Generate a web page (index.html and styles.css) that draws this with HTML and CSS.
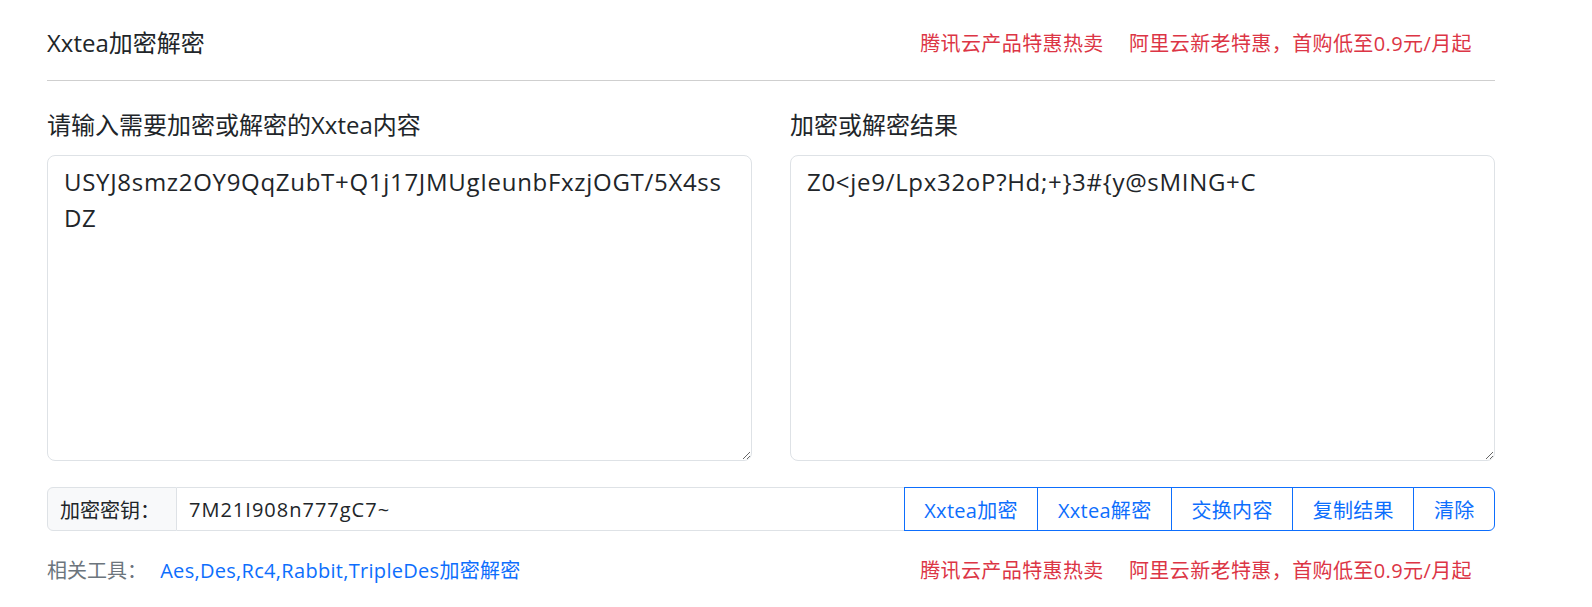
FILE: index.html
```html
<!DOCTYPE html>
<html lang="zh-CN">
<head>
    <meta charset="UTF-8">
    <meta name="viewport" content="width=device-width, initial-scale=1.0">
    <title>Xxtea加密解密</title>
    <link rel="stylesheet" href="styles.css">
</head>
<body>
    <div class="page">
        <div class="header">
            <h4 class="title">Xxtea加密解密</h4>
            <div class="ads">
                <a href="#">腾讯云产品特惠热卖</a>
                <a href="#">阿里云新老特惠，首购低至0.9元/月起</a>
            </div>
        </div>

        <div class="editors">
            <div class="editor">
                <label class="editor-label" for="source">请输入需要加密或解密的Xxtea内容</label>
                <textarea id="source" class="editor-box">USYJ8smz2OY9QqZubT+Q1j17JMUgIeunbFxzjOGT/5X4ssDZ</textarea>
            </div>
            <div class="editor">
                <label class="editor-label" for="result">加密或解密结果</label>
                <textarea id="result" class="editor-box">Z0&lt;je9/Lpx32oP?Hd;+}3#{y@sMING+C</textarea>
            </div>
        </div>

        <div class="key-group">
            <span class="key-label">加密密钥：</span>
            <input class="key-input" type="text" value="7M21I908n777gC7~">
            <button class="action-btn">Xxtea加密</button>
            <button class="action-btn">Xxtea解密</button>
            <button class="action-btn">交换内容</button>
            <button class="action-btn">复制结果</button>
            <button class="action-btn">清除</button>
        </div>

        <div class="footer">
            <div class="related">
                <span class="related-label">相关工具：</span>
                <a href="#">Aes,Des,Rc4,Rabbit,TripleDes加密解密</a>
            </div>
            <div class="ads">
                <a href="#">腾讯云产品特惠热卖</a>
                <a href="#">阿里云新老特惠，首购低至0.9元/月起</a>
            </div>
        </div>
    </div>
</body>
</html>
```

FILE: styles.css
```css
body {
    margin: 0;
    background: #fff;
    color: #212529;
    font-family: "Open Sans", "Noto Sans CJK SC", sans-serif;
}
a {
    text-decoration: none;
}
.page {
    width: 1448px;
    margin-left: 47px;
}
.header {
    display: flex;
    justify-content: space-between;
    align-items: center;
    padding: 28px 0 23px;
    border-bottom: 1px solid #cfcfcf;
}
.title {
    margin: 0;
    font-size: 24px;
    font-weight: 400;
    line-height: 29px;
}
.ads a {
    color: #dc3545;
    font-size: 20px;
    letter-spacing: 0.4px;
    margin-right: 21px;
}
.ads a:last-child {
    margin-right: 23px;
}
.editors {
    display: grid;
    grid-template-columns: 705px 705px;
    column-gap: 38px;
    margin-top: 29px;
}
.editor-label {
    display: block;
    font-size: 24px;
    line-height: 29px;
    margin-bottom: 16px;
}
.editor-box {
    display: block;
    box-sizing: border-box;
    width: 100%;
    height: 306px;
    padding: 8px 16px;
    border: 1px solid #dee2e6;
    border-radius: 8px;
    font-family: inherit;
    font-size: 24px;
    line-height: 1.5;
    letter-spacing: 0.7px;
    color: #212529;
    resize: vertical;
}
.key-group {
    display: flex;
    margin-top: 26px;
    height: 44px;
}
.key-label {
    display: flex;
    align-items: center;
    padding: 0 12px;
    width: 130px;
    box-sizing: border-box;
    background: #f8f9fa;
    border: 1px solid #dee2e6;
    border-radius: 6px 0 0 6px;
    font-size: 20px;
}
.key-input {
    flex: 1;
    min-width: 0;
    padding: 0 12px;
    border: 1px solid #dee2e6;
    border-left: none;
    font-family: inherit;
    font-size: 20px;
    letter-spacing: 1px;
    color: #212529;
    outline: none;
}
.action-btn {
    padding: 0 19.5px;
    margin-left: -1px;
    background: #fff;
    border: 1px solid #0d6efd;
    color: #0d6efd;
    font-family: inherit;
    font-size: 20px;
    letter-spacing: 0.3px;
    cursor: pointer;
}
.action-btn:last-child {
    border-radius: 0 6px 6px 0;
}
.action-btn:hover {
    background: #0d6efd;
    color: #fff;
}
.footer {
    display: flex;
    justify-content: space-between;
    align-items: center;
    margin-top: 25px;
    line-height: 30px;
}
.related-label {
    color: #6c757d;
    font-size: 20px;
    margin-right: 9px;
}
.related a {
    color: #0d6efd;
    font-size: 20px;
    letter-spacing: 0.3px;
}
```
